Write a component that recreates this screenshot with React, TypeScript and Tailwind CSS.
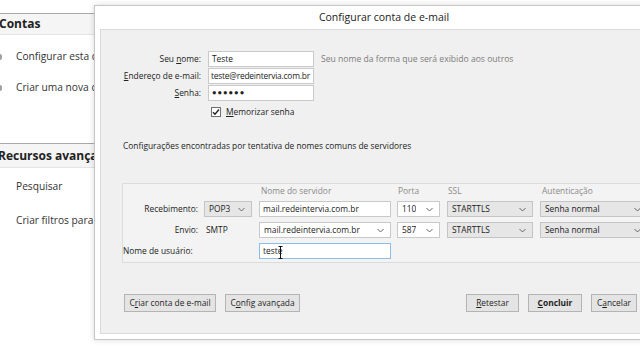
import React from 'react';

const Chevron = () => (
  <svg width="7" height="5" viewBox="0 0 7 5" className="shrink-0">
    <path d="M0.5 1 L3.5 4 L6.5 1" fill="none" stroke="#666" strokeWidth="1" />
  </svg>
);

interface SelectProps {
  value: string;
  width: string;
  gray?: boolean;
}

const Select: React.FC<SelectProps> = ({ value, width, gray }) => (
  <div
    className={`${width} h-[16px] flex items-center justify-between pl-[4px] pr-[6px] border ${
      gray ? 'bg-[#e6e6e6] border-[#c4c4c4]' : 'bg-white border-[#c9c9c9]'
    }`}
  >
    <span className="truncate">{value}</span>
    <Chevron />
  </div>
);

const Input: React.FC<{ value: React.ReactNode; width: string; focus?: boolean; tight?: boolean }> = ({
  value,
  width,
  focus,
  tight,
}) => (
  <div
    className={`${width} h-[16px] flex items-center bg-white border overflow-hidden whitespace-nowrap ${
      tight ? 'pl-[2px] tracking-[-0.2px]' : 'px-[3px]'
    } ${focus ? 'border-[#8cbcec]' : 'border-[#c9c9c9]'}`}
  >
    {value}
  </div>
);

const Button: React.FC<{ children: React.ReactNode; width: string; bold?: boolean; className?: string }> = ({
  children,
  width,
  bold,
  className,
}) => (
  <div
    className={`${width} h-[18px] flex items-center justify-center border border-[#b4b4b4] bg-[#e4e4e4] text-[#1e1e1e] ${
      bold ? 'font-bold' : ''
    } ${className ?? ''}`}
  >
    {children}
  </div>
);

export default function App() {
  return (
    <div className="relative w-[640px] h-[360px] overflow-hidden bg-white font-['Open_Sans',sans-serif] text-[#222]">
      {/* background window */}
      <div className="flex flex-col pt-[13px] text-[10.2px] text-[#333]">
        <div className="h-[22px] flex items-center border-t border-[#a8a8a8] border-b border-b-[#e4e4e4] bg-[#f5f5f5]">
          <span className="-ml-[1px] font-bold text-[12px] text-[#222]">Contas</span>
        </div>
        <div className="h-[31px] mt-[6px] flex items-center">
          <span className="w-[4px] h-[6px] bg-[#a0a0a0] -ml-[2px] mr-[14px] rounded-sm" />
          Configurar esta conta
        </div>
        <div className="h-[31px] flex items-center">
          <span className="w-[4px] h-[6px] bg-[#a0a0a0] -ml-[2px] mr-[14px] rounded-sm" />
          Criar uma nova conta
        </div>
        <div className="h-[25px] mt-[40px] flex items-center border-t border-[#a8a8a8] border-b border-b-[#e4e4e4] bg-[#f5f5f5]">
          <span className="-ml-[2px] font-bold text-[12px] text-[#222]">Recursos avançados</span>
        </div>
        <div className="h-[31px] mt-[3px] flex items-center pl-[16px]">Pesquisar</div>
        <div className="h-[31px] mt-[3px] flex items-center pl-[16px]">Criar filtros para mensagens</div>
      </div>

      {/* dialog */}
      <div className="absolute left-[94px] top-[5px] w-[580px] h-[335px] flex flex-col bg-white border border-[#c6c6c6] shadow-[0_0_6px_rgba(0,0,0,0.15)]">
        <div className="h-[23px] flex items-center justify-center text-[10.5px] text-[#222]">
          Configurar conta de e-mail
        </div>
        <div className="ml-[5px] h-[305px] flex flex-col border border-[#dadada] bg-[#f0f0f0] text-[8.4px]">
          {/* identity form */}
          <div className="mt-[21px] flex flex-col gap-[1px]">
            <div className="flex items-center h-[16px]">
              <span className="w-[100px] text-right">
                Seu <span className="underline">n</span>ome:
              </span>
              <div className="ml-[7px]">
                <Input value="Teste" width="w-[106px]" />
              </div>
              <span className="ml-[7px] text-[8.6px] text-[#7c7c7c]">Seu nome da forma que será exibido aos outros</span>
            </div>
            <div className="flex items-center h-[16px]">
              <span className="w-[100px] text-right">
                <span className="underline">E</span>ndereço de e-mail:
              </span>
              <div className="ml-[7px]">
                <Input value="teste@redeintervia.com.br" width="w-[106px]" tight />
              </div>
            </div>
            <div className="flex items-center h-[16px]">
              <span className="w-[100px] text-right">
                <span className="underline">S</span>enha:
              </span>
              <div className="ml-[7px]">
                <Input value={<span className="tracking-[1px] text-[7.5px]">●●●●●●</span>} width="w-[106px]" />
              </div>
            </div>
            <div className="flex items-center h-[12px] mt-[4px] pl-[110px]">
              <div className="w-[10px] h-[10px] bg-white border border-[#707070] flex items-center justify-center">
                <svg width="8" height="8" viewBox="0 0 8 8">
                  <path d="M1 4.2 L3 6.2 L7 1.5" fill="none" stroke="#222" strokeWidth="1.4" />
                </svg>
              </div>
              <span className="ml-[5px]">
                <span className="underline">M</span>emorizar senha
              </span>
            </div>
          </div>

          <div className="mt-[22px] pl-[22px] h-[12px] flex items-center">
            Configurações encontradas por tentativa de nomes comuns de servidores
          </div>

          {/* server settings */}
          <div className="mt-[31px] ml-[21px] h-[80px] border border-[#dcdcdc] bg-[#f3f3f3] flex flex-col">
            <div className="h-[12px] mt-[1px] flex items-center text-[#8a8a8a]">
              <span className="w-[138px] shrink-0" />
              <span className="w-[137px] shrink-0">Nome do servidor</span>
              <span className="w-[50px] shrink-0">Porta</span>
              <span className="w-[94px] shrink-0">SSL</span>
              <span>Autenticação</span>
            </div>
            <div className="mt-[4px] flex items-center">
              <span className="w-[75px] text-right">Recebimento:</span>
              <div className="ml-[6px]">
                <Select value="POP3" width="w-[48px]" gray />
              </div>
              <div className="ml-[7px]">
                <Input value="mail.redeintervia.com.br" width="w-[132px]" />
              </div>
              <div className="ml-[6px]">
                <Select value="110" width="w-[43px]" />
              </div>
              <div className="ml-[7px]">
                <Select value="STARTTLS" width="w-[86px]" gray />
              </div>
              <div className="ml-[7px]">
                <Select value="Senha normal" width="w-[108px]" gray />
              </div>
            </div>
            <div className="mt-[5px] flex items-center">
              <span className="w-[75px] text-right">Envio:</span>
              <span className="ml-[8px] w-[46px]">SMTP</span>
              <div className="ml-[7px]">
                <Select value="mail.redeintervia.com.br" width="w-[132px]" />
              </div>
              <div className="ml-[6px]">
                <Select value="587" width="w-[43px]" />
              </div>
              <div className="ml-[7px]">
                <Select value="STARTTLS" width="w-[86px]" gray />
              </div>
              <div className="ml-[7px]">
                <Select value="Senha normal" width="w-[108px]" gray />
              </div>
            </div>
            <div className="mt-[5px] flex items-center">
              <span className="w-[136px]">Nome de usuário:</span>
              <div className="relative">
                <Input value="teste" width="w-[132px]" focus />
                {/* text cursor */}
                <svg width="5" height="13" viewBox="0 0 5 13" className="absolute left-[19px] top-[3px]">
                  <path d="M0.5 0.5 H4.5 M2.5 0.5 V12.5 M0.5 12.5 H4.5" fill="none" stroke="#111" strokeWidth="1" />
                </svg>
              </div>
            </div>
          </div>

          {/* buttons */}
          <div className="mt-[31px] flex items-center">
            <Button width="w-[92px]" className="ml-[23px]">
              <span>
                C<span className="underline">r</span>iar conta de e-mail
              </span>
            </Button>
            <Button width="w-[75px]" className="ml-[9px]">
              <span>
                C<span className="underline">o</span>nfig avançada
              </span>
            </Button>
            <Button width="w-[53px]" className="ml-[166px]">
              <span>
                <span className="underline">R</span>etestar
              </span>
            </Button>
            <Button width="w-[54px]" className="ml-[9px]" bold>
              <span>
                <span className="underline">C</span>oncluir
              </span>
            </Button>
            <Button width="w-[46px]" className="ml-[9px]">
              <span>
                C<span className="underline">a</span>ncelar
              </span>
            </Button>
          </div>
        </div>
      </div>
    </div>
  );
}
